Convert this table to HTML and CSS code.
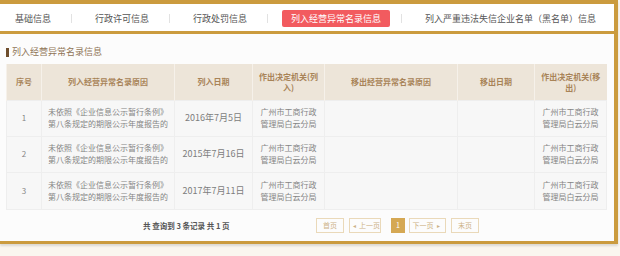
FILE: index.html
```html
<!DOCTYPE html>
<html lang="zh-CN">
<head>
  <meta charset="UTF-8" />
  <title>经营异常名录</title>
  <link rel="stylesheet" href="styles.css">
</head>
<body>
  <div class="frame">
    <ul class="tabs">
      <li class="tab">基础信息</li>
      <li class="sep"></li>
      <li class="tab">行政许可信息</li>
      <li class="sep"></li>
      <li class="tab">行政处罚信息</li>
      <li class="sep"></li>
      <li class="tab active">列入经营异常名录信息</li>
      <li class="sep"></li>
      <li class="tab">列入严重违法失信企业名单（黑名单）信息</li>
    </ul>

    <div class="content">
      <h2 class="title">列入经营异常名录信息</h2>

      <table class="list">
        <colgroup>
          <col class="c-no"><col class="c-reason"><col class="c-date"><col class="c-org">
          <col class="c-reason"><col class="c-date2"><col class="c-org">
        </colgroup>
        <thead>
          <tr>
            <th>序号</th>
            <th>列入经营异常名录原因</th>
            <th>列入日期</th>
            <th>作出决定机关(列入)</th>
            <th>移出经营异常名录原因</th>
            <th>移出日期</th>
            <th>作出决定机关(移出)</th>
          </tr>
        </thead>
        <tbody>
          <tr>
            <td>1</td>
            <td>未依照《企业信息公示暂行条例》第八条规定的期限公示年度报告的</td>
            <td class="date">2016年7月5日</td>
            <td>广州市工商行政管理局白云分局</td>
            <td></td>
            <td></td>
            <td>广州市工商行政管理局白云分局</td>
          </tr>
          <tr>
            <td>2</td>
            <td>未依照《企业信息公示暂行条例》第八条规定的期限公示年度报告的</td>
            <td class="date">2015年7月16日</td>
            <td>广州市工商行政管理局白云分局</td>
            <td></td>
            <td></td>
            <td>广州市工商行政管理局白云分局</td>
          </tr>
          <tr>
            <td>3</td>
            <td>未依照《企业信息公示暂行条例》第八条规定的期限公示年度报告的</td>
            <td class="date">2017年7月11日</td>
            <td>广州市工商行政管理局白云分局</td>
            <td></td>
            <td></td>
            <td>广州市工商行政管理局白云分局</td>
          </tr>
        </tbody>
      </table>

      <div class="pager">
        <span class="info">共 查询到 3 条记录 共 1 页</span>
        <div class="pages">
          <a class="pg first">首页</a>
          <a class="pg prev"><i>◂</i>上一页</a>
          <a class="pg cur">1</a>
          <a class="pg next">下一页<i>▸</i></a>
          <a class="pg last">末页</a>
        </div>
      </div>
    </div>
  </div>
</body>
</html>
```

FILE: styles.css
```css
* { box-sizing: border-box; margin: 0; padding: 0; }

html, body {
  height: 100%;
  background: #faf6ef;
  font-family: "Noto Sans CJK SC", "Noto Sans", sans-serif;
}

.frame {
  width: 618px;
  border-top: 4px solid #cb9b3e;
  border-right: 4px solid #cb9b3e;
  border-bottom: 3px solid #cb9b3e;
  background: #fcfcfc;
  box-shadow: 0 2px 2px rgba(0,0,0,0.12);
}

/* tabs */
.tabs {
  list-style: none;
  display: flex;
  align-items: center;
  box-sizing: content-box;
  height: 25px;
  padding: 2px 0 0 6px;
  background: #fff;
  border-bottom: 3px solid #cb9b3e;
}

.tab {
  font-size: 9px;
  line-height: 17px;
  height: 17px;
  padding: 0 9px;
  color: #555;
  white-space: nowrap;
}

.tab.active {
  background: #f25b5f;
  color: #fff;
  border-radius: 2px;
}

.sep {
  width: 1px;
  height: 9px;
  background: #e2e2e2;
  margin: 0 14px 0 11px;
}

/* content */
.content {
  padding: 12px 0 0 6px;
}

.title {
  font-size: 9px;
  font-weight: normal;
  line-height: 12px;
  height: 12px;
  color: #8f7456;
  display: flex;
  align-items: center;
  margin-bottom: 6px;
}

.title::before {
  content: "";
  width: 3px;
  height: 9px;
  background: #6e4d2c;
  margin-right: 3px;
}

.list {
  width: 600px;
  border-collapse: collapse;
  table-layout: fixed;
}

.c-no { width: 35px; }
.c-reason { width: 133px; }
.c-date { width: 78px; }
.c-date2 { width: 77px; }
.c-org { width: 72px; }

.list th {
  height: 36px;
  background: #ede5d9;
  color: #a88357;
  font-size: 8px;
  font-weight: bold;
  line-height: 11px;
  padding: 0 5px;
  text-align: center;
  border-left: 1px solid #f6f1ea;
}

.list td {
  height: 36px;
  background: #f7f7f7;
  color: #858585;
  font-size: 8px;
  line-height: 12px;
  padding: 0 6px;
  text-align: center;
  border: 1px solid #eeeeee;
}

.list td.date {
  font-size: 9px;
  color: #7d7d7d;
}

.list tr:last-child td { height: 37px; }

/* pager */
.pager {
  display: flex;
  align-items: center;
  height: 31px;
  padding: 1px 0 0 137px;
}

.info {
  font-size: 7.5px;
  font-weight: bold;
  color: #555;
  width: 173px;
}

.pages {
  display: flex;
  align-items: center;
}

.pg {
  height: 15px;
  line-height: 13px;
  border: 1px solid #ead9b9;
  color: #cdb286;
  font-size: 7px;
  text-align: center;
  margin-right: 5px;
}

.pg i {
  font-style: normal;
  font-size: 6px;
  margin: 0 3px;
}

.first, .last { width: 28px; }
.prev { width: 32px; margin-right: 10px; }
.next { width: 37px; }

.cur {
  width: 14px;
  background: #d5a853;
  border-color: #d5a853;
  color: #fff;
  margin-right: 4px;
}
```
